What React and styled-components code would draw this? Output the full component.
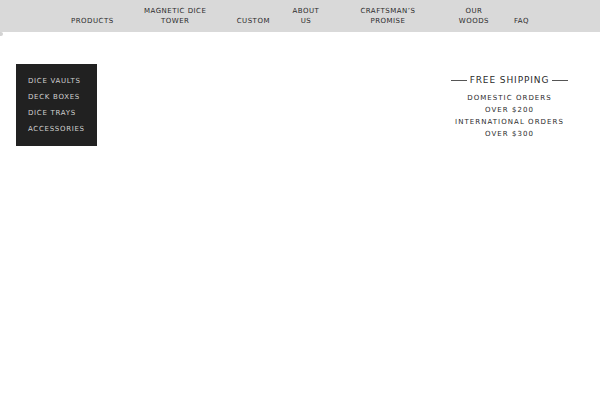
import React from "react";
import styled, { createGlobalStyle } from "styled-components";

const GlobalStyle = createGlobalStyle`
  * { box-sizing: border-box; }
  body {
    margin: 0;
    background: #fff;
    color: #2b2b2b;
    font-family: "DejaVu Sans", Verdana, sans-serif;
  }
`;

const NavBar = styled.nav`
  min-height: 32px;
  padding: 6px 16px;
  background: #d9d9d9;
`;

const NavList = styled.ul`
  display: flex;
  justify-content: center;
  align-items: flex-end;
  gap: 22px;
  margin: 0;
  padding: 0;
  list-style: none;
`;

const NavItem = styled.li`
  width: ${({ $width }) => ($width ? `${$width}px` : "auto")};
  padding: 0 ${({ $inset }) => $inset || 0}px;
  text-align: center;
`;

const NavLink = styled.a`
  display: block;
  color: #2b2b2b;
  font-size: 7px;
  line-height: 10px;
  letter-spacing: 0.07em;
  text-decoration: none;
  text-transform: uppercase;
`;

const Marker = styled.div`
  width: 3px;
  height: 4px;
  background: #d3d3d3;
  border-radius: 0 2px 2px 0;
`;

const Main = styled.main`
  display: flex;
  justify-content: space-between;
  align-items: flex-start;
  padding: 28px 32px 0 16px;
`;

const SideMenu = styled.ul`
  width: 81px;
  margin: 0;
  padding: 9px 0 9px 12px;
  background: #212121;
  list-style: none;
`;

const SideLink = styled.a`
  display: block;
  color: #d0d0d0;
  font-size: 7px;
  line-height: 16px;
  letter-spacing: 0.1em;
  text-decoration: none;
  text-transform: uppercase;
  white-space: nowrap;
`;

const Shipping = styled.section`
  width: 117px;
  padding-top: 10px;
  text-align: center;
  text-transform: uppercase;
  white-space: nowrap;
`;

const ShippingTitle = styled.h2`
  display: flex;
  align-items: center;
  justify-content: center;
  gap: 3px;
  margin: 0 0 6px;
  font-size: 9px;
  font-weight: 400;
  line-height: 12px;
  letter-spacing: 0.1em;

  &::before,
  &::after {
    content: "";
    flex: 1;
    height: 1px;
    background: #555;
  }
`;

const ShippingLine = styled.p`
  margin: 0;
  font-size: 7px;
  line-height: 12px;
  letter-spacing: 0.15em;
`;

const navItems = [
  { label: "Products" },
  { label: "Magnetic Dice Tower", width: 79 },
  { label: "Custom" },
  { label: "About Us", width: 28 },
  { label: "Craftsman’s Promise", width: 92, inset: 16 },
  { label: "Our Woods", width: 36 },
  { label: "FAQ" },
];

const sideItems = ["Dice Vaults", "Deck Boxes", "Dice Trays", "Accessories"];

const shippingLines = [
  "Domestic orders",
  "over $200",
  "International orders",
  "over $300",
];

export default function App() {
  return (
    <>
      <GlobalStyle />
      <NavBar>
        <NavList>
          {navItems.map(({ label, width, inset }) => (
            <NavItem key={label} $width={width} $inset={inset}>
              <NavLink href="#">{label}</NavLink>
            </NavItem>
          ))}
        </NavList>
      </NavBar>
      <Marker />
      <Main>
        <SideMenu>
          {sideItems.map((label) => (
            <li key={label}>
              <SideLink href="#">{label}</SideLink>
            </li>
          ))}
        </SideMenu>
        <Shipping>
          <ShippingTitle>Free Shipping</ShippingTitle>
          {shippingLines.map((line) => (
            <ShippingLine key={line}>{line}</ShippingLine>
          ))}
        </Shipping>
      </Main>
    </>
  );
}
